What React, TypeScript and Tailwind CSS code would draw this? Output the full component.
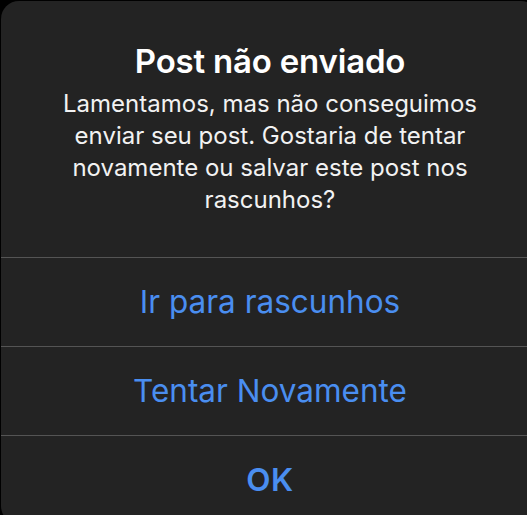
export default function App() {
  const actions = [
    { label: "Ir para rascunhos", bold: false },
    { label: "Tentar Novamente", bold: false },
    { label: "OK", bold: true },
  ];

  return (
    <div className="h-[515px] w-[527px] overflow-hidden bg-black font-['Inter','Liberation_Sans',sans-serif]">
      <div className="ml-[1px] mt-[1px] w-[538px] rounded-[18px] bg-[#232323]">
        <div className="flex flex-col items-center px-4 pt-[41px] pb-[41px] text-center">
          <h1 className="text-[33px] leading-[38px] font-semibold tracking-[-0.2px] text-white">
            Post não enviado
          </h1>
          <p className="mt-[8px] whitespace-nowrap text-[24px] leading-[32px] text-[#f2f2f2]">
            Lamentamos, mas não conseguimos
            <br />
            enviar seu post. Gostaria de tentar
            <br />
            novamente ou salvar este post nos
            <br />
            rascunhos?
          </p>
        </div>
        {actions.map((a) => (
          <div key={a.label} className="border-t border-[#545454]">
            <button
              className={`flex h-[88px] w-full items-center justify-center text-[31.5px] text-[#4a8ef0] ${
                a.bold ? "font-semibold tracking-[0.5px]" : "font-normal"
              }`}
            >
              {a.label}
            </button>
          </div>
        ))}
      </div>
    </div>
  );
}
